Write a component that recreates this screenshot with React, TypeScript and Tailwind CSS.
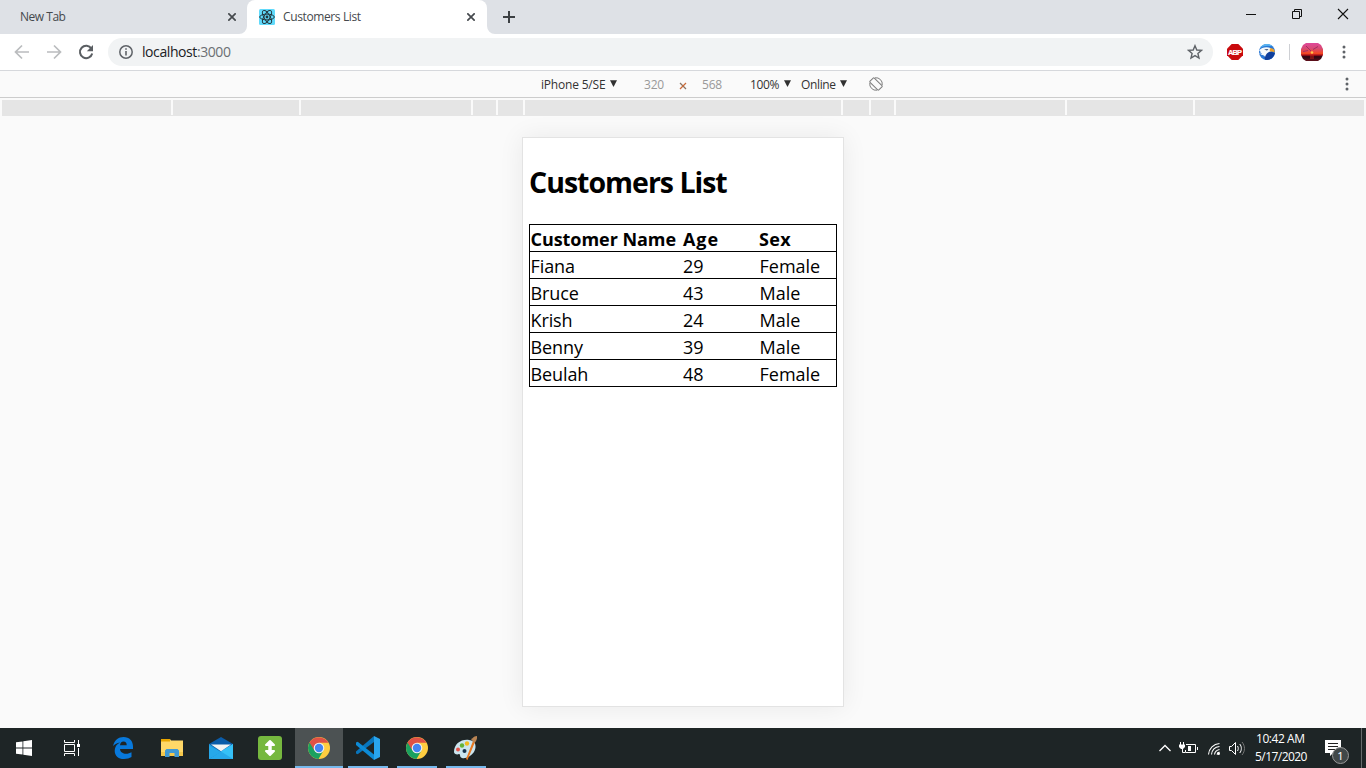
import React from "react";

const customers = [
  ["Fiana", "29", "Female"],
  ["Bruce", "43", "Male"],
  ["Krish", "24", "Male"],
  ["Benny", "39", "Male"],
  ["Beulah", "48", "Female"],
];

function Close() {
  return (
    <svg width="8" height="8" viewBox="0 0 8 8" className="shrink-0">
      <path d="M.3.3l7.4 7.4M7.7.3L.3 7.700" stroke="#45494d" strokeWidth="1.700" />
    </svg>
  );
}

function Dots() {
  return (
    <svg width="4" height="14" viewBox="0 0 4 14" className="shrink-0" fill="#5f6368">
      <circle cx="2" cy="2" r="1.5" />
      <circle cx="2" cy="7" r="1.5" />
      <circle cx="2" cy="12" r="1.5" />
    </svg>
  );
}

function ReactLogo() {
  return (
    <svg width="16" height="16" viewBox="0 0 16 16" className="shrink-0">
      <rect width="16" height="16" rx="1.5" fill="#61dafb" />
      <g fill="none" stroke="#24373f" strokeWidth="1">
        <ellipse cx="8" cy="8" rx="7.3" ry="2.9" />
        <ellipse cx="8" cy="8" rx="7.3" ry="2.9" transform="rotate(60 8 8)" />
        <ellipse cx="8" cy="8" rx="7.3" ry="2.9" transform="rotate(120 8 8)" />
      </g>
      <circle cx="8" cy="8" r="1.400" fill="#24373f" />
    </svg>
  );
}

function TabStrip() {
  return (
    <div className="flex h-[34px] bg-[#dee1e6] text-[12px] leading-[34px] text-[#45494d]">
      <div className="flex w-[247px] items-center pl-5 pr-[11px]">
        <span className="flex-1 tracking-[-0.48px]">New Tab</span>
        <Close />
      </div>
      <div className="relative flex w-[240px] items-center rounded-t-lg bg-white pl-3 pr-3">
        <svg width="8" height="8" className="absolute -left-2 bottom-0">
          <path d="M8 0v8H0a8 8 0 0 0 8-8" fill="#fff" />
        </svg>
        <svg width="8" height="8" className="absolute -right-2 bottom-0">
          <path d="M0 0v8h8a8 8 0 0 1-8-8" fill="#fff" />
        </svg>
        <ReactLogo />
        <span className="ml-2 flex-1 tracking-[-0.38px]">Customers List</span>
        <Close />
      </div>
      <div className="flex flex-1 items-center pl-4">
        <svg width="12" height="12" viewBox="0 0 12 12">
          <path d="M6 0v12M0 6h12" stroke="#3c4043" strokeWidth="2" />
        </svg>
      </div>
      <div className="flex h-[28px] w-[120px] items-center">
        <svg width="120" height="28" viewBox="0 0 120 28" fill="none" stroke="#111">
          <path d="M0 14.500h10M46.500 11.500h7v7h-7zM48.500 11V9.500h7v7H54" />
          <path d="M92 9l10 10M102 9L92 19" strokeWidth="1.100" />
        </svg>
      </div>
    </div>
  );
}

function AddressBar() {
  return (
    <div className="flex h-[37px] items-center border-b border-[#d6d8dc] bg-white">
      <svg width="108" height="36" viewBox="0 0 108 36" fill="none" className="shrink-0">
        <path d="M29 18H16M22 11.500L15.500 18l6.500 6.500M47 18h13M54 11.500l6.500 6.500-6.500 6.500" stroke="#babcbe" strokeWidth="1.700" />
        <path d="M91.400 14.600A6.200 6.200 0 1 0 92.200 19.500" stroke="#5a5e62" strokeWidth="2" />
        <path d="M93 11v6.200h-6.200z" fill="#5a5e62" />
      </svg>
      <div className="flex h-7 w-[1105px] shrink-0 items-center rounded-full bg-[#f1f3f4] pl-[11px] pr-[10px] text-[14px]">
        <svg width="14" height="14" viewBox="0 0 14 14" fill="none" stroke="#5f6368">
          <circle cx="7" cy="7" r="6.200" strokeWidth="1.500" />
          <path d="M7 6v4.500M7 3.300v1.500" strokeWidth="1.600" />
        </svg>
        <span className="ml-[9px] flex-1 pb-[2px] tracking-[-0.42px] text-[#202124]">
          localhost<span className="text-[#6b6f73]">:3000</span>
        </span>
        <svg width="16" height="16" viewBox="0 0 16 16">
          <path d="M8 1.700l1.800 4.300 4.700.4-3.600 3 1.100 4.600L8 11.600 4 14l1.100-4.600-3.600-3 4.700-.4z" fill="none" stroke="#5f6368" strokeWidth="1.400" />
        </svg>
      </div>
      <svg width="16" height="16" viewBox="0 0 16 16" className="ml-[14px] shrink-0 overflow-visible">
        <path d="M4.700 0h6.600L16 4.700v6.600L11.300 16H4.700L0 11.300V4.700z" fill="#c90a0d" />
        <text x="1" y="10.700" fontSize="7.500" fontWeight="700" fontFamily="Liberation Sans, sans-serif" fill="#fff" stroke="#fff" strokeWidth=".2" textLength="14" lengthAdjust="spacing">ABP</text>
      </svg>
      <svg width="16" height="16" viewBox="0 0 16 16" className="ml-4 shrink-0">
        <circle cx="8" cy="8" r="8" fill="#2a78d6" />
        <path d="M1 4a8 8 0 0 1 13-1.300C10 1 5 1.500 1 4" fill="#58b4f1" />
        <path d="M6 15.700C5 12 6 9 11 7.500c2 .2 3.500 1.500 5 1.500A8 8 0 0 1 6 15.700" fill="#103f9c" />
        <path d="M.2 6.500C2.500 3.300 8 2.300 12 4.300l1 2.700-2.500.7C8.500 8.500 7 10 6 13 5.500 11.500 4 10.500 1.500 10.800L3 9.300 0 9.500l2-1.300z" fill="#f7fafc" />
        <path d="M10.800 4.400c3-.4 5 1.200 4.900 4.200-1-1-2.800-1-4.900-1z" fill="#f3a126" />
        <path d="M5 5.500l4.500-.4L8 6.500z" fill="#263f68" />
      </svg>
      <div className="ml-[14px] h-4 w-px shrink-0 bg-[#ced0d4]" />
      <svg width="22" height="18" viewBox="0 0 22 18" className="ml-[11px] shrink-0">
        <defs>
          <linearGradient id="sky" x1="0" y1="0" x2="0" y2="1">
            <stop offset="0" stopColor="#df489a" />
            <stop offset=".3" stopColor="#d84a75" />
            <stop offset=".58" stopColor="#f44722" />
            <stop offset=".68" stopColor="#a30c18" />
            <stop offset=".76" stopColor="#270613" />
            <stop offset="1" stopColor="#61101b" />
          </linearGradient>
        </defs>
        <path d="M5 0h12l3 2 2 4v6l-2 4-3 2H5l-3-2-2-4V6l2-4z" fill="url(#sky)" />
        <path d="M5 3l5 5M12 6.500l5-3M2 8.500l5-1" stroke="#a42e62" strokeWidth="1" />
        <circle cx="11" cy="9.500" r="1.300" fill="#ffc34a" />
        <path d="M9 13h4M9 15h4" stroke="#c52018" />
      </svg>
      <div className="ml-[19px] flex"><Dots /></div>
    </div>
  );
}

function Arrow() {
  return (
    <svg width="7" height="7" viewBox="0 0 7 7" className="-mt-px shrink-0">
      <path d="M0 .3h7L3.500 7z" fill="#303030" />
    </svg>
  );
}

function DeviceBar() {
  return (
    <div className="flex h-[27px] items-center border-b border-[#ccc] bg-[#fafafa] pl-[541px] text-[12px] text-[#333]">
      <span className="w-[69px] pt-[2px] tracking-[-0.2px]">iPhone 5/SE</span>
      <Arrow />
      <span className="ml-[27px] w-[35px] pt-[2px] text-[#999] tracking-[-0.2px]">320</span>
      <svg width="8" height="8" viewBox="0 0 8 8" className="mt-1">
        <path d="M1 1l6 6" stroke="#8a7464" strokeWidth="1.300" />
        <path d="M7 1L1 7" stroke="#cc6a38" strokeWidth="1.300" />
      </svg>
      <span className="ml-[15px] w-[48px] pt-[2px] text-[#999] tracking-[-0.2px]">568</span>
      <span className="w-[34px] pt-[2px] tracking-[-0.4px]">100%</span>
      <Arrow />
      <span className="ml-[10px] w-[39px] pt-[2px] tracking-[-0.35px]">Online</span>
      <Arrow />
      <svg width="14" height="14" viewBox="0 0 14 14" className="ml-[22px]" fill="none" stroke="#7d7d7d">
        <rect x="4" y=".8" width="6" height="12.400" rx=".8" transform="rotate(-45 7 7)" />
        <path d="M6 .8A6.300 6.300 0 0 1 13.200 8M.8 6A6.300 6.300 0 0 0 8 13.200" />
      </svg>
      <div className="ml-auto mr-[17px]"><Dots /></div>
    </div>
  );
}

function Ruler() {
  return (
    <div className="flex h-[18px] gap-[2px] bg-[linear-gradient(#e5e5e5,#e5e5e5)] bg-[length:1362px_1px] bg-[position:2px_17px] bg-no-repeat px-[2px] pt-[2px]">
      <i className="w-[169px] bg-[#e5e5e5]" />
      <i className="w-[126px] bg-[#e5e5e5]" />
      <i className="w-[170px] bg-[#e5e5e5]" />
      <i className="w-[23px] bg-[#e5e5e5]" />
      <i className="w-[25px] bg-[#e5e5e5]" />
      <i className="w-[316px] bg-[#e5e5e5]" />
      <i className="w-[26px] bg-[#e5e5e5]" />
      <i className="w-[23px] bg-[#e5e5e5]" />
      <i className="w-[169px] bg-[#e5e5e5]" />
      <i className="w-[126px] bg-[#e5e5e5]" />
      <i className="w-[169px] bg-[#e5e5e5]" />
    </div>
  );
}

function Phone() {
  return (
    <div className="ml-[522px] mt-[21px] h-[570px] w-[322px] border border-[#e3e3e3] bg-white px-[6px] text-black shadow-[0_0_24px_rgba(0,0,0,0.07)]">
      <h1 className="h-[86px] pt-[24px] text-[28.500px] leading-[40px] font-bold tracking-[-1px] whitespace-nowrap">Customers List</h1>
      <div className="w-[308px] border border-black text-[18px] leading-[26px]">
        <div className="flex h-[26px] pt-[1px] pl-[0.5px] font-bold">
          <span className="w-[152.5px] tracking-[-0.05px]">Customer Name</span>
          <span className="w-[76px] tracking-[0.9px]">Age</span>
          <span className="tracking-[0.3px]">Sex</span>
        </div>
        {customers.map(([name, age, sex]) => (
          <div key={name} className="flex h-[27px] border-t border-black pt-[1px] pl-[0.5px]">
            <span className="w-[152.5px] tracking-[-0.1px]">{name}</span>
            <span className="w-[76px]">{age}</span>
            <span className="pl-[0.500px]">{sex}</span>
          </div>
        ))}
      </div>
    </div>
  );
}

function Chrome() {
  return (
    <svg width="22" height="22" viewBox="0 0 22 22">
      <circle cx="11" cy="11" r="11" fill="#ffcd40" />
      <path d="M11 11L1.500 5.500A11 11 0 0 0 10.500 22l5-8.500z" fill="#1aa15f" />
      <path d="M1.500 5.500A11 11 0 0 1 20.500 5.700H11L6.400 13.600z" fill="#df5146" />
      <circle cx="11" cy="11" r="5.300" fill="#f1f1f1" />
      <circle cx="11" cy="11" r="4.200" fill="#4384f3" />
    </svg>
  );
}

function Taskbar() {
  return (
    <div className="flex h-10 bg-[#1e2526] text-[12px] text-white">
      <div className="flex w-[48px] items-center pl-4">
        <svg width="16" height="16" viewBox="0 0 16 16" fill="#fff">
          <path d="M0 2.300L6.500 1.400v6.100H0zM7.300 1.300L16 0v7.500H7.300zM0 8.500h6.500v6.100L0 13.700zM7.300 8.500H16V16l-8.700-1.300z" />
        </svg>
      </div>
      <div className="flex w-[50px] items-center pl-4">
        <svg width="16" height="16" viewBox="0 0 16 16" fill="none" stroke="#fff">
          <path d="M.5 0v2.500h10V0M.5 4.500h10v7H.5zM.5 16v-2.500h10V16M14.500 0v4M14.500 8v8" />
          <path d="M13 4h3v3h-3z" fill="#fff" stroke="none" />
        </svg>
      </div>
      <div className="flex w-[49px] items-center justify-center">
        <svg width="20" height="22" viewBox="0 0 20 22">
          <path d="M0 9C1.500 3 5.500 0 10.500 0 16.500 0 20 4 20 9.500V12H7c.4 3.400 3 4.700 6 4.700 2.200 0 4-.6 5.500-1.500V20c-2 1.200-4.500 2-7.400 2C5 22 1.700 18.500 1.700 13.700 1.700 10 3.700 7 7 5.400 4 5.700 2 7 0 9m7-.8h6.700C13.700 5.800 12.700 4.500 10.500 4.500S7.300 6 7 8.200" fill="#0879dc" />
        </svg>
      </div>
      <div className="flex w-[49px] items-center justify-center">
        <svg width="22" height="18" viewBox="0 0 22 18">
          <path d="M0 0h9l1 1.500h12V17H0z" fill="#ffd868" />
          <path d="M0 0h9v2.500H0z" fill="#e9a600" />
          <path d="M0 13h22v4H0z" fill="#f5c84c" />
          <path d="M4 18v-6.500L5.500 10h11l1.500 1.500V18h-4.500v-4h-5v4z" fill="#4099d4" />
        </svg>
      </div>
      <div className="flex w-[49px] items-center justify-center">
        <svg width="24" height="22" viewBox="0 0 24 22">
          <path d="M0 7L12 0l12 7v15H0z" fill="#0b5ca9" />
          <path d="M0 7l12 8-12 7z" fill="#1f9de0" />
          <path d="M0 22V9l12 6z" fill="#27a8ea" />
          <path d="M24 7v15H0z" fill="#27a8ea" />
          <path d="M24 7L12 14.500 24 22z" fill="#36c1f7" />
          <path d="M2 7.500h20l-10 6.800z" fill="#f4f4f4" />
        </svg>
      </div>
      <div className="flex w-[49px] items-center justify-center">
        <svg width="24" height="24" viewBox="0 0 24 24">
          <rect width="24" height="24" rx="3" fill="#76b83f" />
          <path d="M12 6v12" stroke="#fff" strokeWidth="3.500" />
          <path d="M8 9l4-4 4 4zM8 15l4 4 4-4z" fill="#fff" stroke="#fff" strokeWidth="2" strokeLinejoin="round" />
        </svg>
      </div>
      <div className="ml-px flex w-12 items-center justify-center border-b-2 border-[#76b9ed] bg-[#4c5253] pt-[2px]"><Chrome /></div>
      <div className="ml-[5px] flex w-10 items-center justify-center border-b-2 border-[#76b9ed] pt-[2px]">
        <svg width="24" height="24" viewBox="0 0 24 24">
          <path d="M18 0v6L1.700 18.300 0 17.500v-2z" fill="#0875bc" />
          <path d="M18 24v-5.500L1.700 5.700 0 6.500v2.500z" fill="#0d8bd6" />
          <path d="M18 0l6 3v18l-6 3z" fill="#29a5ee" />
        </svg>
      </div>
      <div className="ml-[9px] flex w-10 items-center justify-center border-b-2 border-[#76b9ed] pt-[2px]"><Chrome /></div>
      <div className="ml-[9px] flex w-10 items-center justify-center border-b-2 border-[#76b9ed] pt-[1px]">
        <svg width="24" height="24" viewBox="0 0 24 24">
          <path d="M0 16C0 8 7 3 15 4c7 .5 8 7 5 12-3 4-8 7-12 6-3-1-1-4-3-4-2 1-5 0-5-2" fill="#cbe5ef" />
          <circle cx="4" cy="13.500" r="2" fill="#e4554c" />
          <circle cx="8" cy="9.500" r="2.200" fill="#64b237" />
          <circle cx="13" cy="7.500" r="2.200" fill="#f3ba20" />
          <circle cx="10.500" cy="15" r="2" fill="#17334b" />
          <path d="M12 23l7-18 2 1-7.500 18z" fill="#e87820" />
          <path d="M17 3c2 0 2-3 6-3 .5 3-1 6-3 7z" fill="#b98454" />
        </svg>
      </div>
      <svg width="90" height="40" viewBox="0 0 90 40" className="mr-[2px] ml-auto shrink-0" fill="none" stroke="#fff">
        <path d="M3.500 23L9 17.500l5.500 5.500" strokeWidth="1.300" />
        <path d="M30 16.500h9.500v8h-10V22M41.500 19v3M24.500 14v3M27.500 14v3" />
        <path d="M23 16.500h6v2.500l-2 2h-2l-2-2zM32 18h3v5h-3z" fill="#fff" stroke="none" />
        <path d="M26.500 21v3.500H29" />
        <path d="M52.500 26.500C53 20.500 57.500 16 63.500 15.500M55.500 26.500c.5-4.500 3.500-7.500 8-8M58.500 26.500c.5-3 2-4.500 5-5M61 26.500c.3-1.300 1-2 2.500-2.500" strokeWidth="1.100" />
        <circle cx="62.500" cy="25.500" r="1.500" fill="#fff" stroke="none" />
        <path d="M73.500 18.500h2l4-4v12l-4-4h-2z" />
        <path d="M81.500 18c1 1.500 1 3.500 0 5M83.700 16c2.200 2.500 2.200 6.500 0 9" />
        <path d="M86 14c3.300 4 3.300 9 0 13" stroke="#777" />
      </svg>
      <div className="flex w-[70px] flex-col items-start pt-[2px] pl-[7px] leading-[18px] whitespace-nowrap">
        <span className="pl-px tracking-[-0.45px]">10:42 AM</span>
        <span className="tracking-[-0.55px]">5/17/2020</span>
      </div>
      <svg width="40" height="40" viewBox="0 0 40 40" className="shrink-0">
        <path d="M7 12h16v13h-8l-3 3v-3H7z" fill="#fff" />
        <path d="M10 15.500h10M10 18.500h10M10 21.500h7" stroke="#222" />
        <circle cx="22.500" cy="27.500" r="8" fill="#414849" stroke="#999" />
        <text x="22.500" y="31.500" fontSize="11" fontFamily="Noto Sans, sans-serif" fill="#fff" textAnchor="middle">1</text>
      </svg>
      <div className="mr-[4px] ml-[3px] h-10 w-px shrink-0 bg-[#666b6c]" />
    </div>
  );
}

export default function App() {
  return (
    <div className="flex h-[768px] w-[1366px] flex-col overflow-hidden bg-[#fafafa] font-['Open_Sans','Noto_Sans',sans-serif]">
      <TabStrip />
      <AddressBar />
      <DeviceBar />
      <div className="flex-1">
        <Ruler />
        <Phone />
      </div>
      <Taskbar />
    </div>
  );
}
